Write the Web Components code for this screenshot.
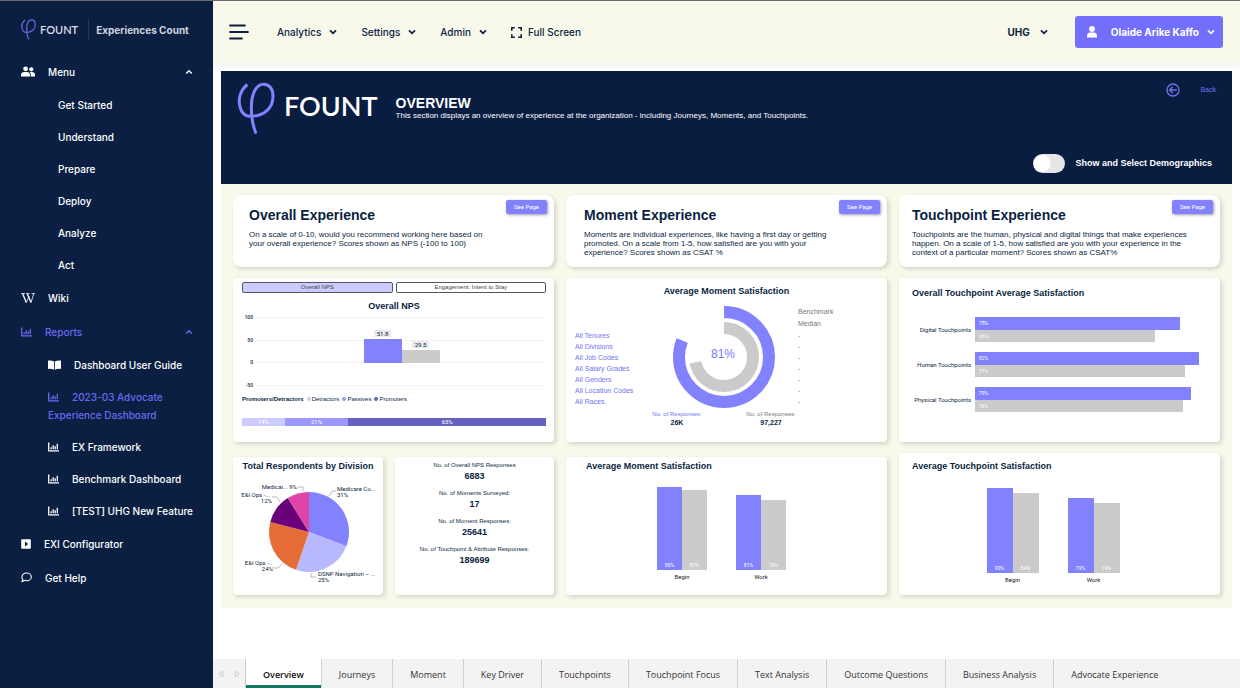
<!DOCTYPE html>
<html lang="en">
<head>
<meta charset="utf-8">
<title>FOUNT - Experiences Count</title>
<style>
  :root {
    --navy: #0a1f42;
    --cream: #f8f8eb;
    --violet: #8282ff;
    --grey: #cbcbcb;
    --ui: Inter, "Open Sans", sans-serif;
    --report: "Liberation Sans", Arial, sans-serif;
    --chart: Roboto, "Liberation Sans", sans-serif;
  }
  body { margin: 0; background: #fff; color: var(--navy); font-family: var(--ui); font-size: 10px; }
</style>
</head>
<body>
<fount-app></fount-app>

<script>
const define = (name, html, setup) => {
  const template = document.createElement('template');
  template.innerHTML = html;
  customElements.define(name, class extends HTMLElement {
    constructor() {
      super();
      this.attachShadow({ mode: 'open' }).append(template.content.cloneNode(true));
    }
    connectedCallback() {
      if (setup && !this.ready) { this.ready = true; setup(this, this.shadowRoot); }
    }
  });
};

const ICONS = {
  users: [14, 11, '<g fill="currentColor"><circle cx="4.6" cy="2.8" r="2.4"/><circle cx="10.3" cy="3.3" r="2.1"/><path d="M0 10.5V9c0-2 1.400-3 3-3h3c1.700 0 3 1 3 3v1.500zM9.800 10.500V9c0-1.200-.4-2.200-1.100-3h2.300c1.800 0 3 1 3 2.800v1.700z"/></g>'],
  wiki: [14, 10, '<g fill="none" stroke="currentColor"><path stroke-width="1.300" d="M1.700.8 5.300 9.500M6.300.8 10 9.500"/><path stroke-width=".8" d="M5.300 9.500 8.300 3M10 9.500 12.700.8M0 .6h4M5 .6h3.600M10.600.6H14"/></g>'],
  chart: [11, 10, '<g fill="none" stroke="currentColor" stroke-width="1.300"><path d="M.7.6v8.200H11"/><path d="M3.200 7.200V5.200M5.200 7.200V3.200M7.200 7.200V4.200M9.300 7.200V1.800"/></g>'],
  book: [13, 10, '<path fill="currentColor" d="M6.100 1.400v8.400C4.600 9 2.500 8.700.5 8.900A.5.500 0 0 1 0 8.400V1C0 .7.200.5.500.5 2.500.3 4.600.5 6.100 1.400zM6.900 1.400v8.400c1.500-.8 3.600-1.100 5.600-.9.300 0 .5-.2.500-.5V1c0-.3-.2-.5-.5-.5-2-.2-4.100 0-5.600.9z"/>'],
  config: [10, 10, '<path fill="currentColor" fill-rule="evenodd" d="M1 .2h8c.5 0 .8.300.8.800v8c0 .5-.3.800-.8.800H1C.5 9.800.2 9.500.2 9V1C.2.5.5.2 1 .2zM4 2.500v5L7.200 5z"/>'],
  comment: [11, 11, '<path fill="none" stroke="currentColor" stroke-width="1.100" stroke-linejoin="round" d="M5.600 1C8.200 1 10.300 2.700 10.300 4.900S8.200 8.700 5.600 8.700c-.7 0-1.400-.1-2-.4C2.900 9 1.900 9.500.8 9.500c.6-.6 1-1.300 1.100-2C1.300 6.800.9 5.900.9 4.900.9 2.700 3 1 5.600 1z"/>'],
  up: [8, 6, '<path fill="none" stroke="currentColor" stroke-width="1.400" d="M1.200 4.500 4 1.700l2.800 2.800"/>'],
  down: [8, 6, '<path fill="none" stroke="currentColor" stroke-width="1.700" d="M1 1.300 4 4.300l3-3"/>'],
  burger: [20, 16, '<path fill="none" stroke="currentColor" stroke-width="2.200" stroke-linecap="round" d="M1.200 1.500h14.600M1.200 8h17.600M1.200 14.500h11.600"/>'],
  expand: [11, 11, '<path fill="none" stroke="currentColor" stroke-width="1.600" d="M.8 3.800v-3h3M7.200.8h3v3M10.200 7.200v3h-3M3.800 10.200h-3v-3"/>'],
  person: [10, 12, '<g fill="currentColor"><circle cx="5" cy="3" r="2.900"/><path d="M0 11.600V10c0-2 1.200-3.400 3-3.400h4c1.800 0 3 1.400 3 3.400v1.600z"/></g>'],
  back: [14, 14, '<g fill="none" stroke="currentColor" stroke-width="1.300"><circle cx="7" cy="7" r="6"/><path d="M10.800 7H3.600M6.800 3.800 3.600 7l3.200 3.200"/></g>'],
  prev: [6, 8, '<path fill="none" stroke="currentColor" stroke-width=".8" d="M4.800 1v6L1 4z"/>'],
  next: [6, 8, '<path fill="none" stroke="currentColor" stroke-width=".8" d="M1.200 1v6L5 4z"/>'],
};

define('ui-icon', `
  <style>:host { display: inline-block; line-height: 0; flex: none; } svg { display: block; }</style>
`, (el, root) => {
  const [w, h, art] = ICONS[el.getAttribute('name')];
  root.innerHTML += `<svg width="${w}" height="${h}" viewBox="0 0 ${w} ${h}" aria-hidden="true">${art}</svg>`;
});

define('fount-logo', `
  <style>
    :host { display: flex; align-items: center; gap: 4px; color: #d9dde6; font: 600 11px/16px Lato, sans-serif; }
    svg { width: 15px; height: 21px; flex: none; color: #6b69e0; }
    :host([large]) { gap: 9px; color: #fff; font: 600 27px/32px Lato, sans-serif; }
    :host([large]) svg { width: 38px; height: 53px; color: var(--violet); }
    :host([large]) span { padding-bottom: 5px; }
  </style>
  <svg viewBox="68 243 114 158" aria-hidden="true">
    <path fill="none" stroke="currentColor" stroke-width="9" d="M99 250C80 265 71 290 76 312c4 22 16 33 32 33 42 0 68-25 68-60 0-23-12-36-28-36-24 0-37 31-37 71 0 30 5 55 14 77"/>
  </svg>
  <span>FOUNT</span>
`);

/* ---------- side bar ---------- */
define('nav-item', `
  <style>
    :host { display: block; color: #fff; font-weight: 500; }
    a, button {
      display: flex; align-items: center; width: 100%; box-sizing: border-box; margin: 0; border: 0;
      background: none; color: inherit; font: inherit; line-height: 18px; padding: 8px 20px 8px 21px;
      text-align: left; text-decoration: none;
    }
    .label { flex: 1; }
    ui-icon { margin-right: 13px; vertical-align: -1px; }
    ui-icon[name=up] { margin: 0; }
    :host([level="2"]) a { padding: 7px 14px 7px 58px; }
    :host([level="2"][icon]) a { padding-left: 48px; }
    :host([active]) { color: #6b69f0; }
  </style>
`, (el, root) => {
  const icon = el.getAttribute('icon');
  const art = icon ? `<ui-icon name="${icon}"></ui-icon>` : '';
  const body = `<span class="label">${art}<slot></slot></span>`;
  root.innerHTML += el.hasAttribute('group')
    ? `<button type="button" aria-expanded="true">${body}<ui-icon name="up"></ui-icon></button>`
    : `<a href="#">${body}</a>`;
});

define('app-sidebar', `
  <style>
    :host { display: block; width: 213px; flex: none; background: var(--navy); }
    header { display: flex; align-items: center; padding: 18px 0 15px 21px; }
    fount-logo { padding-right: 10px; border-right: 1px solid #26365a; }
    strong { margin-left: 7px; color: #d0d5df; font-weight: 700; }
  </style>
  <header><fount-logo></fount-logo><strong>Experiences Count</strong></header>
  <nav aria-label="Main">
    <nav-item group icon="users">Menu</nav-item>
    <nav-item level="2">Get Started</nav-item>
    <nav-item level="2">Understand</nav-item>
    <nav-item level="2">Prepare</nav-item>
    <nav-item level="2">Deploy</nav-item>
    <nav-item level="2">Analyze</nav-item>
    <nav-item level="2">Act</nav-item>
    <nav-item icon="wiki">Wiki</nav-item>
    <nav-item group active icon="chart">Reports</nav-item>
    <nav-item level="2" icon="book">Dashboard User Guide</nav-item>
    <nav-item level="2" active icon="chart">2023-03 Advocate Experience Dashboard</nav-item>
    <nav-item level="2" icon="chart">EX Framework</nav-item>
    <nav-item level="2" icon="chart">Benchmark Dashboard</nav-item>
    <nav-item level="2" icon="chart">[TEST] UHG New Feature</nav-item>
    <nav-item icon="config">EXI Configurator</nav-item>
    <nav-item icon="comment">Get Help</nav-item>
  </nav>
`);

/* ---------- top bar ---------- */
define('menu-button', `
  <style>
    :host { display: block; }
    button { display: flex; align-items: center; gap: 8px; margin: 0; padding: 0; border: 0; background: none; color: inherit; font: 500 10px/16px var(--ui); }
    .text { display: flex; align-items: center; gap: 8px; }
    :host([strong]) button { font-weight: 700; }
    :host([strong]) .text { gap: 10px; }
    :host([primary]) button { gap: 14px; padding: 8px; padding-left: 12px; height: 32px; border-radius: 3px; background: #726ffc; color: #fff; font-weight: 700; }
  </style>
  <button type="button"><slot name="icon"></slot><span class="text"><slot></slot><ui-icon name="down"></ui-icon></span></button>
`);

define('app-header', `
  <style>
    :host { display: flex; align-items: center; position: relative; padding: 15px 17px 15px 16px; background: var(--cream); box-shadow: 0 2px 8px rgba(10,31,66,.08); }
    button { display: flex; align-items: center; gap: 6px; margin: 0; padding: 0; border: 0; background: none; color: inherit; font: 500 10px/16px var(--ui); }
    nav { display: flex; align-items: center; gap: 24px; margin-left: 28px; }
    .end { display: flex; align-items: center; gap: 27px; margin-left: auto; }
  </style>
  <button type="button" aria-label="Toggle menu"><ui-icon name="burger"></ui-icon></button>
  <nav aria-label="Tools">
    <menu-button>Analytics</menu-button>
    <menu-button>Settings</menu-button>
    <menu-button>Admin</menu-button>
    <button type="button"><ui-icon name="expand"></ui-icon>Full Screen</button>
  </nav>
  <div class="end">
    <menu-button strong>UHG</menu-button>
    <menu-button primary><ui-icon slot="icon" name="person"></ui-icon>Olaide Arike Kaffo</menu-button>
  </div>
`);

/* ---------- report ---------- */
define('report-banner', `
  <style>
    :host { display: flex; justify-content: space-between; padding: 11px 20px 11px 16px; background: #081d3f; color: #fff; font-family: var(--report); }
    .brand { display: flex; align-items: flex-start; gap: 18px; }
    h1 { margin: 13px 0 0; font-size: 14px; line-height: 16px; }
    p { margin: 0; font-size: 8px; line-height: 10px; }
    .side { display: flex; flex-direction: column; gap: 56px; align-items: flex-end; }
    a { display: flex; align-items: center; gap: 20px; margin: 1px -4px 0 0; color: #7472f0; font-size: 7px; line-height: 14px; text-decoration: none; }
    label { display: flex; align-items: center; gap: 10px; font-size: 9px; line-height: 20px; font-weight: 700; }
    input { appearance: none; margin: 0; width: 32px; height: 19px; border-radius: 10px; background: radial-gradient(circle at 9px 50%, #fff 8px, #e6e6e6 9px); }
  </style>
  <div class="brand">
    <fount-logo large></fount-logo>
    <div>
      <h1>OVERVIEW</h1>
      <p>This section displays an overview of experience at the organization - including Journeys, Moments, and Touchpoints.</p>
    </div>
  </div>
  <div class="side">
    <a href="#"><ui-icon name="back"></ui-icon>Back</a>
    <label><input type="checkbox" role="switch">Show and Select Demographics</label>
  </div>
`);

define('report-card', `
  <style>
    :host { display: block; border-radius: 4px; background: #fff; box-shadow: 2px 2px 4px rgba(60,60,50,.2); }
    h2 { margin: 0; font-size: 9px; line-height: 10px; font-weight: 700; }
  </style>
  <h2><slot name="title"></slot></h2>
  <slot></slot>
`);

define('intro-card', `
  <style>
    :host { display: block; position: relative; padding: 12px 13px 10px var(--inset, 13px); border-radius: 8px; background: #fff; box-shadow: 2px 2px 4px rgba(60,60,50,.2); }
    h2 { margin: 0 0 7px; font-size: 14px; line-height: 16px; }
    p { margin: 0; max-width: var(--measure, 252px); font-size: 8px; line-height: 9px; }
    button { position: absolute; top: 5px; right: 7px; padding: 0 8px; border: 0; border-radius: 2px; background: var(--violet); color: #fff; font: 6px/14px var(--chart); box-shadow: 1px 1px 3px rgba(60,60,90,.5); }
  </style>
  <h2><slot name="title"></slot></h2>
  <p><slot></slot></p>
  <button type="button">See Page</button>
`);

define('nps-chart', `
  <style>
    :host { display: block; padding: 4px 8px 16px 9px; }
    .switch { display: grid; grid-template-columns: 1fr 1fr; gap: 3px; }
    button { margin: 0; padding: 0; border: 1px solid #55555f; border-radius: 2px; background: #fff; color: #444; font: 6px/9px var(--report); }
    button[aria-pressed=true] { background: #cbcbff; }
    h2 { margin: 8px 0 3px; font-size: 9px; line-height: 10px; text-align: center; }
    .plot { display: grid; height: 75px; }
    .axis, .bars { grid-area: 1 / 1; }
    .axis { display: flex; flex-direction: column; justify-content: space-between; font: 500 5px/7px var(--chart); }
    .axis div { display: flex; align-items: center; gap: 4px; }
    .axis span { width: 11px; text-align: right; }
    .axis i { flex: 1; border-top: 1px dotted #e4e4e8; }
    .bars { display: flex; justify-content: center; align-items: flex-end; padding: 0 0 26px 15px; }
    .bars div { width: 38px; display: flex; flex-direction: column; align-items: center; gap: 2px; font: 6px/7px var(--chart); }
    .bars b { font-weight: 400; background: #e8e9ee; border-radius: 1px; padding: 0 3px; }
    .bars i { width: 100%; background: var(--c); }
    .legend { display: flex; align-items: center; gap: 3px; margin: 6px 0 15px; padding: 0; list-style: none; font: 6px/8px var(--report); }
    .legend li { display: flex; align-items: center; gap: 1px; }
    .legend li::before { content: ""; width: 4px; height: 4px; border-radius: 50%; background: var(--c); }
    .legend li:first-child::before { display: none; }
    .legend li:first-child { font-weight: 700; }
    .split { display: flex; color: #fff; font: 6px/8px var(--chart); text-align: center; }
    .split span { background: var(--c); }
  </style>
  <div class="switch">
    <button type="button" aria-pressed="true">Overall NPS</button>
    <button type="button" aria-pressed="false">Engagement: Intent to Stay</button>
  </div>
  <h2>Overall NPS</h2>
  <div class="plot">
    <div class="axis">
      <div><span>100</span><i></i></div><div><span>50</span><i></i></div>
      <div><span>0</span><i></i></div><div><span>-50</span><i></i></div>
    </div>
    <div class="bars">
      <div><b>51.8</b><i style="--c:var(--violet);height:24px"></i></div>
      <div><b>29.5</b><i style="--c:var(--grey);height:13px"></i></div>
    </div>
  </div>
  <ul class="legend">
    <li>Promoters/Detractors</li><li style="--c:#cbcbff">Detractors</li>
    <li style="--c:#9a98ff">Passives</li><li style="--c:#6461c0">Promoters</li>
  </ul>
  <div class="split">
    <span style="--c:#cbcbff;flex:14">14%</span><span style="--c:#9a98ff;flex:21">21%</span><span style="--c:#6461c0;flex:65">65%</span>
  </div>
`);

define('moment-gauge', `
  <style>
    :host { display: block; padding: 10px 14px 15px 9px; }
    .row { display: grid; grid-template-columns: 1fr 102px 1fr; }
    ul { margin: 0; padding: 24px 0 0; list-style: none; color: #7472f0; font-size: 7px; line-height: 11px; }
    ul.right { padding: 0 0 0 23px; color: #777; }
    .right li:nth-child(-n+2) { line-height: 12px; }
    svg { display: block; }
    text { font-size: 12px; fill: #7a78fa; }
    dl { display: flex; justify-content: center; margin: 2px 0 0; text-align: center; }
    dl div { width: 94px; }
    dt { font-size: 6px; line-height: 8px; color: #777; }
    dl div:first-child dt { color: #7472f0; }
    dd { margin: 0; font-size: 7px; line-height: 9px; font-weight: 700; }
  </style>
  <div class="row">
    <ul><li>All Tenures</li><li>All Divisions</li><li>All Job Codes</li><li>All Salary Grades</li><li>All Genders</li><li>All Location Codes</li><li>All Races</li></ul>
    <svg width="102" height="102" viewBox="0 0 102 102" role="img" aria-label="81 percent">
      <g fill="none" stroke-width="12" transform="rotate(-90 51 51)">
        <circle cx="51" cy="51" r="45" stroke="#8282ff" pathLength="100" stroke-dasharray="81 100"/>
        <circle cx="51" cy="51" r="29" stroke="#cbcbcb" pathLength="100" stroke-dasharray="72 100"/>
      </g>
      <text x="50" y="52" text-anchor="middle">81%</text>
    </svg>
    <ul class="right"><li>Benchmark</li><li>Median</li><li>-</li><li>-</li><li>-</li><li>-</li><li>-</li><li>-</li><li>-</li></ul>
  </div>
  <dl>
    <div><dt>No. of Responses:</dt><dd>26K</dd></div>
    <div><dt>No. of Responses:</dt><dd>97,227</dd></div>
  </dl>
`);

/* Paired horizontal bars; data is "label:score:benchmark" entries split by ";" */
define('row-bars', `
  <style>
    :host { display: flex; flex-direction: column; gap: 10px; padding-top: 19px; font: 6px/12px var(--chart); }
    .group { display: grid; grid-template-columns: 59px 1fr; column-gap: 4px; align-items: center; height: 25px; }
    .name { text-align: right; white-space: nowrap; }
    .bars { display: flex; flex-direction: column; height: 25px; }
    .bars span { flex: 1; box-sizing: border-box; padding-left: 4px; width: calc(var(--v) / 86 * 100%); background: var(--violet); color: #fff; font-size: 5px; }
    .bars span + span { background: var(--grey); }
  </style>
`, (el, root) => {
  root.innerHTML += el.getAttribute('data').split(';').map(row => {
    const [name, a, b] = row.split(':');
    return `<div class="group"><div class="name">${name}</div><div class="bars"><span style="--v:${a}">${a}%</span><span style="--v:${b}">${b}%</span></div></div>`;
  }).join('');
});

/* Paired vertical bars, same data format */
define('column-bars', `
  <style>
    :host { display: flex; justify-content: center; gap: 29px; padding-top: 7px; font: 6px/8px var(--chart); }
    .bars { display: flex; align-items: flex-end; height: var(--plot, 92px); }
    .bars span { display: flex; align-items: flex-end; justify-content: center; width: var(--bar, 25px); height: calc(var(--v) * 1%); background: var(--violet); color: #fff; font-size: 5px; line-height: 10px; }
    .bars span + span { background: var(--grey); }
    .name { margin-top: 3px; text-align: center; color: #222; }
  </style>
`, (el, root) => {
  root.innerHTML += el.getAttribute('data').split(';').map(row => {
    const [name, a, b] = row.split(':');
    return `<div><div class="bars"><span style="--v:${a}">${a}%</span><span style="--v:${b}">${b}%</span></div><div class="name">${name}</div></div>`;
  }).join('');
});

define('division-pie', `
  <style>
    :host { display: block; padding-top: 7px; }
    svg { display: block; margin: 0 auto; overflow: visible; }
    text { font: 6px var(--chart); fill: #0a1f42; }
    .lead { fill: none; stroke: #9a9a9a; stroke-width: .7; }
  </style>
`, (el, root) => {
  const cx = 73, cy = 54, r = 40;
  const slices = [[0, 111, '#8282ff'], [111, 199, '#b8b8ff'], [199, 284.5, '#e66c37'], [284.5, 328, '#6b007b'], [328, 360, '#e044a7']];
  const at = d => [cx + r * Math.sin(d * Math.PI / 180), cy - r * Math.cos(d * Math.PI / 180)].map(n => n.toFixed(2)).join(' ');
  const paths = slices.map(([a, b, c]) => `<path fill="${c}" d="M${cx} ${cy}L${at(a)}A${r} ${r} 0 0 1 ${at(b)}Z"/>`).join('');
  root.innerHTML += `<svg width="144" height="106" viewBox="0 0 144 106" role="img" aria-label="Total Respondents by Division">${paths}
    <path class="lead" d="M93 18l3-5h4M67 13V9h-5M44 24l-3-5h-5M46 86l-4 4h-6M75 95v4h5"/>
    <text x="101" y="13">Medicare Co...</text><text x="101" y="19">31%</text>
    <text x="61" y="11" text-anchor="end">Medicai... 9%</text>
    <text x="34" y="19" text-anchor="end">E&amp;I Ops -...</text><text x="36" y="25" text-anchor="end">12%</text>
    <text x="36" y="87" text-anchor="end">E&amp;I Ops -..</text><text x="37" y="93" text-anchor="end">24%</text>
    <text x="82" y="98">DSNP Navigation – ...</text><text x="82" y="104">25%</text></svg>`;
});

define('stat-list', `
  <style>
    :host { display: block; }
    dl { display: flex; flex-direction: column; gap: 7px; margin: 0; text-align: center; }
    dt { font-size: 6px; line-height: 8px; }
    dd { margin: 1px 0 0; font-size: 9px; line-height: 12px; font-weight: 700; }
  </style>
  <dl>
    <div><dt>No. of Overall NPS Responses</dt><dd>6883</dd></div>
    <div><dt>No. of Moments Surveyed:</dt><dd>17</dd></div>
    <div><dt>No. of Moment Responses:</dt><dd>25641</dd></div>
    <div><dt>No. of Touchpoint &amp; Attribute Responses:</dt><dd>189699</dd></div>
  </dl>
`);

define('report-page', `
  <style>
    :host { display: block; margin: 8px 8px 0; background: var(--cream); font-family: var(--report); color: var(--navy); }
    .grid { display: grid; grid-template-columns: repeat(3, minmax(0, 1fr)); gap: 11px 12px; padding: 11px 12px 13px; }
    .pair { display: grid; grid-template-columns: 150px minmax(0, 1fr); gap: 12px; margin-top: 4px; }
    .pair report-card { padding-top: 4px; }
    .centered { padding-top: 8px; text-align: center; }
    .touch { padding: 10px 10px 0 13px; }
    .moment-bars { margin-top: 4px; padding: 4px 10px 0 20px; }
    .moment-bars column-bars { margin-left: -20px; }
    .touch-bars { --plot: 95px; --bar: 26px; padding: 8px 13px 11px; }
    .touch-bars column-bars { margin-right: 13px; }
    .pair report-card:first-child { text-align: center; }
    moment-gauge { text-align: left; }
  </style>
  <report-banner></report-banner>
  <div class="grid">
    <intro-card style="--inset:16px;--measure:240px"><span slot="title">Overall Experience</span>On a scale of 0-10, would you recommend working here based on your overall experience? Scores shown as NPS (-100 to 100)</intro-card>
    <intro-card style="--inset:18px"><span slot="title">Moment Experience</span>Moments are individual experiences, like having a first day or getting promoted. On a scale from 1-5, how satisfied are you with your experience? Scores shown as CSAT %</intro-card>
    <intro-card style="--measure:288px"><span slot="title">Touchpoint Experience</span>Touchpoints are the human, physical and digital things that make experiences happen. On a scale of 1-5, how satisfied are you with your experience in the context of a particular moment? Scores shown as CSAT%</intro-card>

    <report-card><nps-chart></nps-chart></report-card>
    <report-card class="centered"><span slot="title">Average Moment Satisfaction</span><moment-gauge></moment-gauge></report-card>
    <report-card class="touch"><span slot="title">Overall Touchpoint Average Satisfaction</span>
      <row-bars data="Digital Touchpoints:75:66;Human Touchpoints:82:77;Physical Touchpoints:79:76"></row-bars></report-card>

    <div class="pair">
      <report-card><span slot="title">Total Respondents by Division</span><division-pie></division-pie></report-card>
      <report-card><stat-list></stat-list></report-card>
    </div>
    <report-card class="moment-bars"><span slot="title">Average Moment Satisfaction</span><column-bars data="Begin:90:87;Work:81:76"></column-bars></report-card>
    <report-card class="touch-bars"><span slot="title">Average Touchpoint Satisfaction</span><column-bars data="Begin:90:84;Work:79:74"></column-bars></report-card>
  </div>
`);

define('page-tabs', `
  <style>
    :host { display: flex; overflow: hidden; background: #f3f3f3; color: #333; }
    .arrows { display: flex; align-items: center; gap: 10px; box-sizing: border-box; width: 33px; flex: none; padding-left: 5px; color: #c4c4c4; border-right: 1px solid #c8c8c8; }
    [role=tablist] { display: flex; }
    button { margin: 0; padding: 2px 17px 0; height: 29px; border: 0; border-right: 1px solid #d0d0d0; background: none; color: inherit; font: 9px/24px "Open Sans", "Noto Sans", sans-serif; white-space: nowrap; }
    button:last-child { border-right: 0; }
    button[aria-selected=true] { background: #fff; font-weight: 600; box-shadow: inset 0 -3px #117865; color: #111; }
  </style>
  <div class="arrows"><ui-icon name="prev"></ui-icon><ui-icon name="next"></ui-icon></div>
  <div role="tablist"></div>
`, (el, root) => {
  root.querySelector('[role=tablist]').innerHTML = el.getAttribute('pages').split(',')
    .map((t, i) => `<button type="button" role="tab" aria-selected="${i === 0}">${t}</button>`).join('');
});

define('fount-app', `
  <style>
    :host { display: flex; box-sizing: border-box; min-height: 100vh; border-top: 1px solid #6b6b6e; border-bottom: 1px solid #fff; }
    main { display: flex; flex-direction: column; flex: 1; min-width: 0; }
    page-tabs { margin-top: auto; }
  </style>
  <app-sidebar></app-sidebar>
  <main>
    <app-header></app-header>
    <report-page></report-page>
    <page-tabs pages="Overview,Journeys,Moment,Key Driver,Touchpoints,Touchpoint Focus,Text Analysis,Outcome Questions,Business Analysis,Advocate Experience"></page-tabs>
  </main>
`);
</script>
</body>
</html>
